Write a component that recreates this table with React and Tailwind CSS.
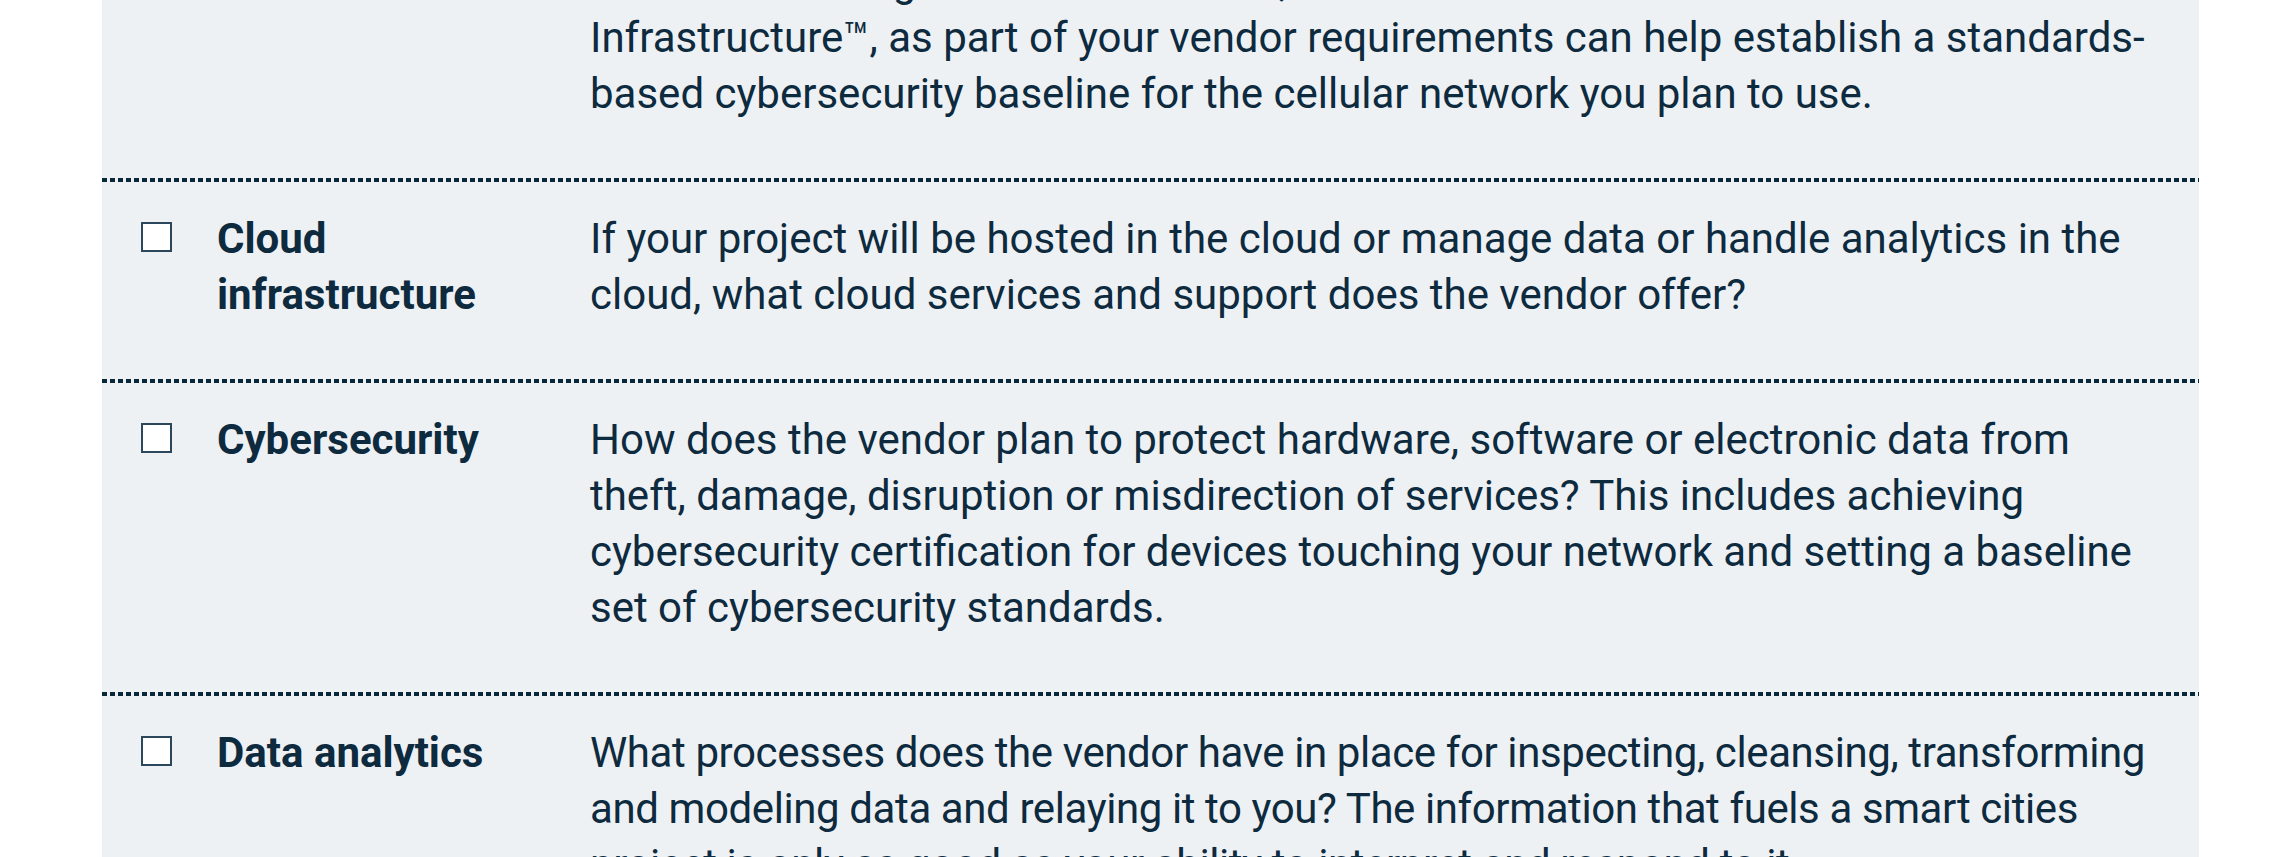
import React from 'react';

// Vendor checklist rows: checkbox, topic, question
const rows = [
  {
    label: 'Connectivity',
    text: (
      <>
        Requiring cybersecurity certification of devices, such as the CTIA Cybersecurity Certification Program for IoT
        Devices, as well as the CTIA Certification for Cellular
        <br />
        Infrastructure™, as part of your vendor requirements can help establish a standards-based cybersecurity
        baseline for the cellular network you plan to use.
      </>
    ),
  },
  {
    label: 'Cloud infrastructure',
    text: 'If your project will be hosted in the cloud or manage data or handle analytics in the cloud, what cloud services and support does the vendor offer?',
  },
  {
    label: 'Cybersecurity',
    text: 'How does the vendor plan to protect hardware, software or electronic data from theft, damage, disruption or misdirection of services? This includes achieving cybersecurity certification for devices touching your network and setting a baseline set of cybersecurity standards.',
  },
  {
    label: 'Data analytics',
    text: 'What processes does the vendor have in place for inspecting, cleansing, transforming and modeling data and relaying it to you? The information that fuels a smart cities project is only as good as your ability to interpret and respond to it.',
    tight: true,
  },
];

const Checkbox = () => (
  <div className="mt-[11px] w-[31px] h-[30px] border-[2.5px] border-[#2b475b] bg-white"></div>
);

// heavy dotted rule between rows
const Divider = () => (
  <div className="h-[4px] bg-[repeating-linear-gradient(90deg,#0a2639_0px,#0a2639_5px,transparent_5px,transparent_8px)]"></div>
);

const ChecklistRow = ({ label, text, tight }) => (
  <div className="grid grid-cols-[76px_373px_1565px] pl-[39px] pt-[29px] pb-[56px]">
    <div>
      <Checkbox />
    </div>
    <h4 className="font-bold pr-[60px]">{label}</h4>
    <p className={tight ? 'tracking-[-0.4px]' : ''}>{text}</p>
  </div>
);

export default function App() {
  return (
    <div className="h-[857px] overflow-hidden bg-white font-['Roboto',sans-serif] text-[42px] leading-[56px] text-[#0d2a3e]">
      <div className="ml-[102px] w-[2097px] -mt-[131px] bg-[#eef1f4]">
        {rows.map((row, i) => (
          <React.Fragment key={row.label}>
            {i > 0 && <Divider />}
            <ChecklistRow label={row.label} text={row.text} tight={row.tight} />
          </React.Fragment>
        ))}
      </div>
    </div>
  );
}
